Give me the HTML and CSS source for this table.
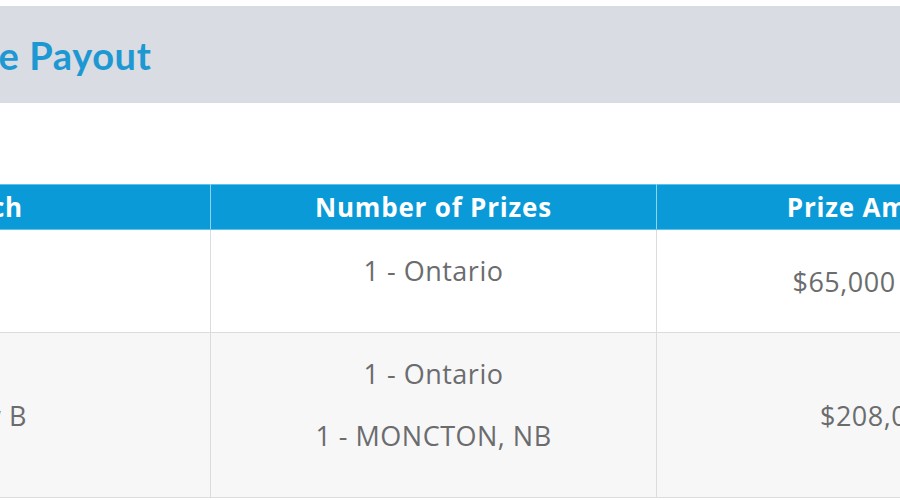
FILE: index.html
```html
<!DOCTYPE html>
<html lang="en">
<head>
<meta charset="utf-8">
<title>Prize Payout</title>
<link rel="stylesheet" href="styles.css">
</head>
<body>
<div class="viewport">
  <div class="content">
    <div class="title-bar">
      <h2 class="title">Prize Payout</h2>
    </div>
    <table class="payout">
      <thead>
        <tr>
          <th class="c1">Match</th>
          <th class="c2">Number of Prizes</th>
          <th class="c3">Prize Amount</th>
        </tr>
      </thead>
      <tbody>
        <tr>
          <td class="mid"></td>
          <td><p>1 - Ontario</p></td>
          <td class="mid">$65,000 Cash</td>
        </tr>
        <tr class="alt">
          <td class="mid">Draw B</td>
          <td><p>1 - Ontario</p><p>1 - MONCTON, NB</p></td>
          <td class="mid">$208,000</td>
        </tr>
      </tbody>
    </table>
  </div>
</div>
</body>
</html>
```
FILE: styles.css
```css
html, body {
  margin: 0;
  padding: 0;
  background: #ffffff;
}
.viewport {
  width: 900px;
  height: 500px;
  overflow: hidden;
}
.content {
  margin-left: -251px;
  width: 1400px;
  padding-top: 6px;
}
.title-bar {
  background: #d9dce2;
  height: 97px;
  display: flex;
  align-items: center;
  padding-left: 183px;
}
.title {
  margin: 0;
  font-family: "Lato", "Open Sans", sans-serif;
  font-weight: 700;
  font-size: 38px;
  color: #1d98d2;
  letter-spacing: 0.6px;
}
.payout {
  margin-top: 81px;
  border-collapse: collapse;
  font-family: "Open Sans", "Noto Sans", sans-serif;
}
.payout th {
  height: 44px;
  padding: 0;
  background: #0a9ad8;
  color: #ffffff;
  font-family: "Open Sans", "Noto Sans", sans-serif;
  font-weight: 700;
  font-size: 26px;
  letter-spacing: 0.8px;
  text-align: center;
  border-left: 1px solid #8fd3ef;
  border-right: 1px solid #8fd3ef;
  border-top: 1px solid #5cc3ec;
  border-bottom: 1px solid #5cc3ec;
}
.payout th.c1 { width: 460px; }
.payout th.c2 { width: 445px; }
.payout th.c3 { width: 445px; }
.payout td {
  padding: 20px 0;
  text-align: center;
  vertical-align: top;
  color: #6b6c6e;
  font-size: 27px;
  letter-spacing: 0.5px;
  border: 1px solid #dcdcdc;
  border-top: none;
}
.payout td.mid {
  vertical-align: middle;
  padding: 0;
}
.payout td p {
  margin: 0 0 20px;
  line-height: 42px;
}
.alt td {
  background: #f7f7f8;
}
```
